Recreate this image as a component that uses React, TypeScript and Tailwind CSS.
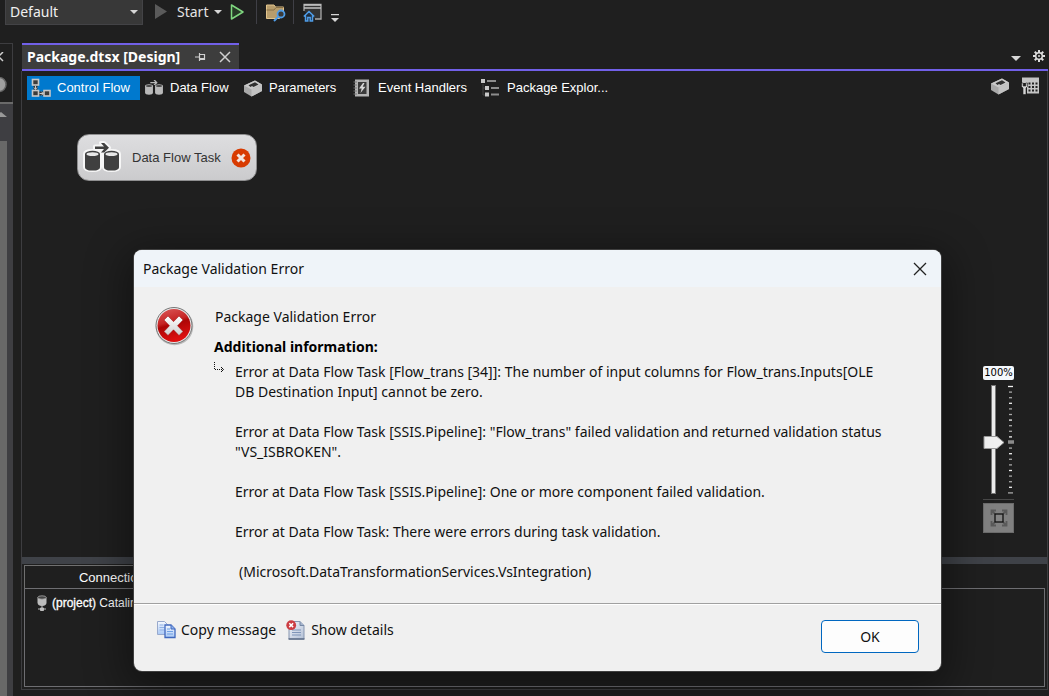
import React from "react";

const uiFont = "font-['Noto_Sans','Open_Sans',sans-serif]";
const tabFont = "font-['Liberation_Sans',Arial,sans-serif]";

function Cylinder({ x, fill, rim }: { x: number; fill: string; rim: string }) {
  return (
    <g transform={`translate(${x} 0)`}>
      <path d="M0 13v13c0 2.600 3 3.600 7.500 3.600S15 28.600 15 26V13z" fill={fill} />
      <ellipse cx="7.500" cy="13" rx="7.500" ry="3.200" fill={fill} />
      <ellipse cx="7.500" cy="13.200" rx="6" ry="1.900" fill={rim} />
    </g>
  );
}

function DataFlowIcon({ className, fill, rim, halo }: { className: string; fill: string; rim: string; halo?: boolean }) {
  return (
    <svg className={className} viewBox="0 0 38 34" aria-hidden="true">
      {halo && (
        <g fill="#f6f6f6" stroke="#f6f6f6" strokeWidth="4" strokeLinejoin="round">
          <path d="M2 13c0-4 15-4 15 0v13c0 4-15 4-15 0zM21 13c0-4 15-4 15 0v13c0 4-15 4-15 0z" />
          <path d="M12 5.500h8.500L18 2h3l5 4.800-5 4.700h-3l2.500-3.500H12z" />
        </g>
      )}
      <Cylinder x={2} fill={fill} rim={rim} />
      <Cylinder x={21} fill={fill} rim={rim} />
      <path d="M12 5.500h9L18 2h3.200L26 6.800l-4.800 4.700H18L21 8h-9z" fill={fill} />
    </svg>
  );
}

function ControlFlowIcon() {
  return (
    <svg className="size-5 shrink-0" viewBox="0 0 20 20" fill="#3c3c3c" stroke="#c8c8c8" aria-hidden="true">
      <path d="M4.500 2v14M4.500 15.500h12" stroke="#333" strokeWidth="4" />
      <rect x="1.500" y="1.500" width="6" height="5.500" strokeWidth="1.600" />
      <rect x="1.500" y="12.500" width="6" height="5.500" strokeWidth="1.600" />
      <rect x="13" y="12.500" width="6" height="5.500" strokeWidth="1.600" />
      <path d="M4.500 8v3M3 9.500l1.500 2L6 9.500M8.500 15.500h3.500M10.500 14l2 1.500-2 1.500" strokeWidth="1" fill="none" />
    </svg>
  );
}

function BoxIcon() {
  return (
    <svg className="size-5 shrink-0" viewBox="0 0 20 20" aria-hidden="true">
      <path d="M1 7.500 12 2.500l7 4v6.500L8.500 18.500 1 14z" fill="#a9a9a9" />
      <path d="M1 7.500 12 2.500l7 4-10.500 5z" fill="#c9c9c9" />
      <path d="M5.500 7.300 12 4.300l3.500 2.200-5 2.600-1.500-1-1.500.9z" fill="#303030" />
      <path d="M8.500 11.500v7l10.500-5.500V6.500z" fill="#c2c2c2" />
    </svg>
  );
}

function EventIcon() {
  return (
    <svg className="size-5 shrink-0" viewBox="0 0 20 20" aria-hidden="true">
      <path d="M3 1.500h14v17H3z" fill="#b4b4b4" />
      <path d="M6 4h8.500v12H6z" fill="#3b3b3b" />
      <path d="M11 5 7 10.500h2.700L8.500 15l5-6.200h-2.800L12.500 5z" fill="#d8d8d8" />
      <path d="M1.500 4H5M1.500 7H5M1.500 10H5M1.500 13H5M1.500 16H5" stroke="#777" strokeWidth="1.200" />
    </svg>
  );
}

function ExplorerIcon() {
  return (
    <svg className="size-5 shrink-0" viewBox="0 0 20 20" aria-hidden="true">
      <path d="M0 1h4v4H0zM4 8h4v4H4zM4 14.500h4v4H4z" fill="#c8c8c8" />
      <path d="M6 3h9M10 10h8M10 16.500h8" stroke="#8d8d8d" strokeWidth="1.800" />
      <path d="M2 6v11h2M2 10h2" stroke="#444" fill="none" />
    </svg>
  );
}

function VariablesIcon() {
  return (
    <svg className="size-5" viewBox="0 0 20 20" aria-hidden="true">
      <path d="M2 1.500h17v16H7V7H2z" fill="#c4c4c4" />
      <path d="M8.500 6.500h2v2h-2zM12 6.500h2v2h-2zM15.500 6.500h2v2h-2zM8.500 10h2v2h-2zM12 10h2v2h-2zM15.500 10h2v2h-2zM8.500 13.500h2v2h-2zM12 13.500h2v2h-2zM15.500 13.500h2v2h-2z" fill="#222" />
      <path d="M1.500 7v3.500L3 12v6.500h3V12l1.500-1.500V7H5.800v3H3.200V7z" fill="#d4d4d4" stroke="#1f1f1f" strokeWidth=".6" />
    </svg>
  );
}

function GearIcon() {
  const teeth = [0, 45, 90, 135, 180, 225, 270, 315];
  return (
    <svg className="size-3" viewBox="0 0 12 12" aria-hidden="true">
      {teeth.map((a) => (
        <rect key={a} x="5" y="0" width="2" height="3" fill="#ddd" transform={`rotate(${a} 6 6)`} />
      ))}
      <circle cx="6" cy="6" r="3.300" fill="none" stroke="#ddd" strokeWidth="1.500" />
      <circle cx="6" cy="6" r="1" fill="#ddd" />
    </svg>
  );
}

function Caret({ className = "h-1 w-2" }: { className?: string }) {
  return (
    <svg className={`shrink-0 ${className}`} viewBox="0 0 8 4" aria-hidden="true">
      <path d="M0 0h8L4 4z" fill="#d6d6d6" />
    </svg>
  );
}

function Toolbar() {
  return (
    <header className={`flex h-[43px] items-start pl-[5px] text-sm text-[#e4e4e4] ${uiFont}`}>
      <div className="relative h-[25px] w-[138px] border border-t-0 border-[#434346] bg-[#383838]">
        <select aria-label="Solution configuration" className="block h-6 w-full appearance-none bg-transparent pl-1 text-sm leading-6 text-[#f0f0f0] outline-none">
          <option>Default</option>
        </select>
        <span className="pointer-events-none absolute top-2.5 right-1 flex">
          <Caret />
        </span>
      </div>
      <button type="button" className="ml-3 flex h-6 items-center">
        <svg className="h-4 w-3" viewBox="0 0 12 16" aria-hidden="true">
          <path d="M0 0v15l12-7.500z" fill="#5a5a5a" />
        </svg>
        <span className="ml-2.5">Start</span>
        <span className="ml-1.5 flex"><Caret /></span>
      </button>
      <button type="button" aria-label="Start without debugging" className="ml-2 flex h-6 items-center">
        <svg className="h-4 w-3.5" viewBox="0 0 14 16" aria-hidden="true">
          <path d="M1.500 1v14L13 8z" fill="#263a26" stroke="#7fd67f" strokeWidth="1.500" strokeLinejoin="round" />
        </svg>
      </button>
      <div className="ml-3 h-6 w-px bg-[#3f3f46]" />
      <button type="button" aria-label="Find in files" className="ml-2 flex h-6 items-center">
        <svg className="h-5 w-[22px]" viewBox="0 0 22 20" aria-hidden="true">
          <path d="M1.500 3v13.500h13l4-5V5h-8L9 3z" fill="#b89d6c" stroke="#e3c58d" />
          <path d="M1.500 8h7.500l2-2.500h7.500" stroke="#8a7146" fill="none" />
          <path d="m13.500 14.500-4.500 4.500" stroke="#4f9de8" strokeWidth="2" />
          <circle cx="16" cy="12" r="3.500" fill="#3b3a38" stroke="#4f9de8" strokeWidth="1.800" />
        </svg>
      </button>
      <div className="ml-1.5 h-6 w-px bg-[#3f3f46]" />
      <button type="button" aria-label="Start window" className="ml-[9px] flex h-6 items-center">
        <svg className="h-5 w-5" viewBox="0 0 20 20" aria-hidden="true">
          <path d="M1 9V2.500h17V17h-6" fill="#333" stroke="#aaa" strokeWidth="1.300" />
          <path d="M1 3h17M1 6h17" stroke="#c2c2c2" strokeWidth="1.300" />
          <path d="M.8 14.500 6 9.500l5.200 5M2.500 13.500V19h2.300v-3.500h2.400V19h2.300v-5.500" fill="#20344a" stroke="#4f9de8" strokeWidth="1.500" />
        </svg>
      </button>
      <button type="button" aria-label="Toolbar options" className="mt-3.5 ml-2">
        <svg className="h-2 w-2" viewBox="0 0 8 8" aria-hidden="true">
          <path d="M0 0h8v1.200H0zM0 4h8L4 8z" fill="#d6d6d6" />
        </svg>
      </button>
    </header>
  );
}

function LeftDock() {
  return (
    <aside className="flex w-[13px] shrink-0 flex-col overflow-hidden border-t border-[#3d3d40] bg-[#3e3e42]">
      <div className="flex h-[58px] flex-col border-r border-[#3d3d40] bg-[#1f1f1f]">
        <svg className="mt-2 h-2.5 w-3" viewBox="0 0 12 10" aria-hidden="true">
          <path d="m-6 0 9 9M3 0l-9 9" stroke="#d0d0d0" strokeWidth="1.500" />
        </svg>
        <svg className="mt-[15px] h-4 w-3" viewBox="0 0 12 16" aria-hidden="true">
          <circle cx="-1" cy="7.500" r="7" fill="#a0a0a0" stroke="#666" strokeWidth="1.500" />
        </svg>
      </div>
      <div className="h-0.5 bg-[#6a6a6a]" />
      <svg className="mt-2 h-1.5 w-[7px]" viewBox="0 0 7 6" aria-hidden="true">
        <path d="M-5 5 1 0l6 5z" fill="#999" />
      </svg>
      <div className="mt-[23px] w-[7px] grow bg-[#686868]" />
    </aside>
  );
}

const tabs = [
  { label: "Control Flow", icon: <ControlFlowIcon />, active: true },
  { label: "Data Flow", icon: <DataFlowIcon className="h-[18px] w-5 shrink-0" fill="#b9b9b9" rim="#444" />, active: false },
  { label: "Parameters", icon: <BoxIcon />, active: false },
  { label: "Event Handlers", icon: <EventIcon />, active: false },
  { label: "Package Explor...", icon: <ExplorerIcon />, active: false },
];

function DesignerTabs() {
  return (
    <div className={`flex h-[29px] items-end justify-between pr-[7px] pl-[5px] text-[13px] text-white ${tabFont}`}>
      <nav className="grid grid-cols-[113px_99px_109px_129px_auto]">
        {tabs.map((t) => (
          <button key={t.label} type="button" className={`flex h-6 items-center gap-1.5 px-1 whitespace-nowrap ${t.active ? "bg-[#0079ce]" : ""}`}>
            {t.icon}
            <span>{t.label}</span>
          </button>
        ))}
      </nav>
      <div className="flex h-7 items-center gap-2.5">
        <button type="button" aria-label="Parameters"><BoxIcon /></button>
        <button type="button" aria-label="Variables"><VariablesIcon /></button>
      </div>
    </div>
  );
}

function ZoomControl() {
  const ticks = Array.from({ length: 20 }, (_, i) => i);
  return (
    <div className="absolute top-[266px] right-[33px] flex w-[31px] flex-col items-center">
      <output className="h-3.5 w-full rounded-xs bg-[#f4f8fc] text-center font-['DejaVu_Sans',sans-serif] text-[10px] leading-[14px] text-black">100%</output>
      <div className="relative mt-1">
        <svg className="block h-[111px] w-[31px]" viewBox="0 0 31 111" aria-hidden="true">
          <rect x="8.500" y="1.500" width="4" height="108" fill="#ececec" stroke="#777" />
          {ticks.map((i) => (
            <path key={i} d={`M${i === 0 || i === 19 ? 25 : 26} ${2.5 + i * 5.6}h${i === 0 || i === 19 ? 5 : 3}`} stroke={i % 3 ? "#a8a8a8" : "#f0f0f0"} strokeWidth="1.300" />
          ))}
          <path d="M25 58h6" stroke="#8b8b8b" strokeWidth="3.500" />
          <path d="M1 52.500h13l7 6-7 6H1z" fill="#f0f0f0" stroke="#999" />
        </svg>
        <input type="range" aria-label="Zoom" min="10" max="190" defaultValue="100" className="absolute inset-0 h-full w-full opacity-0 [writing-mode:vertical-lr]" />
      </div>
      <div className="mt-1 h-px w-full bg-[#484848]" />
      <button type="button" aria-label="Zoom to fit" className="mt-[3px] flex h-[30px] w-full items-center justify-center border border-[#6c6c6c] bg-[#808080]">
        <svg className="size-[18px]" viewBox="0 0 18 18" fill="none" aria-hidden="true">
          <path d="M1.500 6V1.500H6M12 1.500h4.500V6M16.500 12v4.500H12M6 16.500H1.500V12M2 2l3 3M16 2l-3 3M16 16l-3-3M2 16l3-3" stroke="#5a5a5a" strokeWidth="1.800" />
          <rect x="5" y="5" width="8" height="8" fill="#858585" stroke="#111" strokeWidth="1.300" />
        </svg>
      </button>
    </div>
  );
}

function Designer() {
  return (
    <main className={`relative h-[457px] ${tabFont}`}>
      <div className="absolute top-[34px] left-[55px] flex h-[47px] w-[180px] items-center rounded-xl border border-[#8f8f90] bg-linear-to-b from-[#dedee0] to-[#cbcbcd] pr-[5px] pl-[5px] text-[13px] text-[#333]">
        <DataFlowIcon className="h-[34px] w-[38px] shrink-0" fill="#404040" rim="#e8e8e8" halo />
        <span className="ml-[11px] whitespace-nowrap">Data Flow Task</span>
        <svg className="ml-auto size-5 shrink-0" viewBox="0 0 20 20" aria-hidden="true">
          <circle cx="10" cy="10" r="9.500" fill="#d83b01" />
          <path d="m6.500 6.500 7 7m0-7-7 7" stroke="#f3e6e0" strokeWidth="3" />
        </svg>
      </div>
      <ZoomControl />
    </main>
  );
}

function Connections() {
  return (
    <section className={`flex grow flex-col px-0.5 pt-px pb-0.5 text-white ${tabFont}`}>
      <h2 className="h-[23px] w-[237px] border border-b-0 border-[#707070] text-center text-[13px] leading-[23px]">Connection Managers</h2>
      <ul className="grow border border-[#6e6e72] pt-1 pl-[11px]">
        <li className="flex h-5 items-center gap-1 text-[11px]">
          <svg className="h-4 w-3" viewBox="0 0 12 16" aria-hidden="true">
            <path d="M1.500 2.500v5C1.500 9.500 3 11 6 11s4.500-1.500 4.500-3.500v-5z" fill="#bdbdbd" />
            <ellipse cx="6" cy="2.500" rx="4.200" ry="1.700" fill="#444" stroke="#aaa" strokeWidth=".8" />
            <path d="M6 11v3M2 14h8M4.500 13h3v2.500h-3z" stroke="#bdbdbd" fill="#bdbdbd" />
          </svg>
          <span className="text-xs whitespace-nowrap"><span className="[-webkit-text-stroke:0.3px_white]">(project)</span> CatalinDb</span>
        </li>
      </ul>
    </section>
  );
}

function ErrorDialog() {
  return (
    <div role="dialog" aria-labelledby="dialog-title" className={`absolute top-[250px] left-[134px] w-[807px] overflow-hidden rounded-lg bg-[#f0f0f0] text-sm leading-5 text-[#111] shadow-[0_0_0_1px_#3f3f3f,0_10px_40px_8px_rgba(0,0,0,0.4)] ${uiFont}`}>
      <div className="flex h-[37px] items-center justify-between bg-[#eff4f9] pr-3.5 pl-[9px]">
        <h1 id="dialog-title">Package Validation Error</h1>
        <button type="button" aria-label="Close">
          <svg className="size-3.5" viewBox="0 0 14 14" aria-hidden="true">
            <path d="m1 1 12 12M13 1 1 13" stroke="#222" strokeWidth="1.300" />
          </svg>
        </button>
      </div>
      <div className="flex h-[316px] pt-5 pl-5">
        <svg className="size-10 shrink-0" viewBox="0 1 40 40" aria-hidden="true">
          <defs>
            <linearGradient id="errRed" x1="0" y1="0" x2="0.300" y2="1">
              <stop offset="0" stopColor="#dc5a5a" />
              <stop offset="0.450" stopColor="#c62525" />
              <stop offset="0.550" stopColor="#ad0606" />
              <stop offset="1" stopColor="#dd1010" />
            </linearGradient>
            <linearGradient id="errX" x1="0" y1="0" x2="0" y2="1">
              <stop offset="0" stopColor="#fff" />
              <stop offset="1" stopColor="#cfcfcf" />
            </linearGradient>
          </defs>
          <circle cx="20.500" cy="20.500" r="18.800" fill="#bbb" />
          <circle cx="20" cy="19.500" r="18" fill="#e8e8e8" stroke="#777" />
          <circle cx="20" cy="19.500" r="16.500" fill="url(#errRed)" />
          <path d="m14 10 5.500 5.700L25 10l4 4-5.500 5.700 5.500 5.800-4 4-5.500-5.700-5.500 5.700-4-4 5.500-5.800L10 14z" fill="url(#errX)" stroke="#991111" strokeWidth=".5" />
        </svg>
        <div className="pl-5">
          <p className="pl-px">Package Validation Error</p>
          <h2 className="mt-2.5 font-bold text-black">Additional information:</h2>
          <div className="mt-[5px] flex">
            <svg className="h-3 w-[21px] shrink-0" viewBox="0 1 21 12" fill="none" stroke="#111" aria-hidden="true">
              <path d="M.5 1v8" strokeDasharray="1 1" />
              <path d="M1 8.500h8" strokeDasharray="1 1" />
              <path d="m7 6 2.500 2.500L7 11" />
            </svg>
            <div className="space-y-5">
              <p>
                Error at Data Flow Task [Flow_trans [34]]: The number of input columns for Flow_trans.Inputs[OLE
                <br />
                DB Destination Input] cannot be zero.
              </p>
              <p>
                Error at Data Flow Task [SSIS.Pipeline]: "Flow_trans" failed validation and returned validation status
                <br />
                "VS_ISBROKEN".
              </p>
              <p>Error at Data Flow Task [SSIS.Pipeline]: One or more component failed validation.</p>
              <p>Error at Data Flow Task: There were errors during task validation.</p>
              <p className="pl-1">(Microsoft.DataTransformationServices.VsIntegration)</p>
            </div>
          </div>
        </div>
      </div>
      <div className="flex h-[68px] items-start border-t border-[#a0a0a0] pr-[22px] pl-[22px] shadow-[inset_0_1px_0_#fff]">
        <button type="button" className="mt-4 flex items-center gap-[5px]">
          <svg className="h-[18px] w-5" viewBox="0 0 20 18" aria-hidden="true">
            <defs>
              <linearGradient id="sheet" x1="0" y1="0" x2="0" y2="1">
                <stop offset="0" stopColor="#f4f8ff" />
                <stop offset="1" stopColor="#a9c8f5" />
              </linearGradient>
            </defs>
            <path d="M1.500.5h7l3 3v10h-10z" fill="url(#sheet)" stroke="#98a9cc" />
            <path d="M3.500 4h4M3.500 6.500h5M3.500 9h5" stroke="#8fb0e4" />
            <path d="M9 4h6l4 4v8.500H9z" fill="url(#sheet)" stroke="#3f67bd" strokeWidth="1.300" />
            <path d="M15 4v4h4" fill="#8fb2ec" stroke="#3f67bd" />
            <path d="M11 8h3M11 10.500h6M11 13h6" stroke="#6f9fe4" />
          </svg>
          <span>Copy message</span>
        </button>
        <button type="button" className="mt-4 ml-2.5 flex items-center gap-[5px]">
          <svg className="size-5" viewBox="0 0 20 20" aria-hidden="true">
            <defs>
              <linearGradient id="report" x1="0" y1="0" x2="1" y2="1">
                <stop offset="0" stopColor="#f1f4f9" />
                <stop offset="1" stopColor="#b3c0d6" />
              </linearGradient>
            </defs>
            <path d="M3 1.500h11l4 4V19H3z" fill="url(#report)" stroke="#8796b0" />
            <path d="M14 1.500v4h4" fill="#a6b5cd" stroke="#7688a5" />
            <path d="M6 10h9M6 12.500h9M6 15h9" stroke="#7f95b8" />
            <path d="M2.500 19h16" stroke="#5f6f89" strokeWidth="1.500" />
            <circle cx="5.200" cy="5.200" r="4.900" fill="#cc3d43" />
            <path d="m3.300 3.300 3.800 3.800m0-3.800L3.300 7.100" stroke="#fff" strokeWidth="1.500" />
          </svg>
          <span>Show details</span>
        </button>
        <button type="button" className="mt-4 ml-auto h-[33px] w-[98px] rounded border border-[#0067c0] bg-[#fdfdfd] text-center">OK</button>
      </div>
    </div>
  );
}

export default function App() {
  return (
    <div className="relative flex min-h-screen flex-col overflow-hidden bg-[#1f1f1f]">
      <Toolbar />
      <div className="flex grow">
        <LeftDock />
        <div className="flex grow flex-col pr-px pb-1.5 pl-2">
          <div className={`ml-px flex h-[26px] items-stretch justify-between ${uiFont}`}>
            <div className="flex w-[217px] items-center border-t-2 border-[#7160e8] bg-[#3d3d3d] pl-[5px] text-sm font-bold text-white">
              <span className="whitespace-nowrap">Package.dtsx [Design]</span>
              <button type="button" aria-label="Pin tab" className="ml-[15px]">
                <svg className="h-2.5 w-3" viewBox="0 0 12 10" fill="none" stroke="#d0d0d0" aria-hidden="true">
                  <path d="M0 5h4M4.500 1v8M4.500 2.500h5v5h-5M4.500 6.500h5" strokeWidth="1.200" />
                </svg>
              </button>
              <button type="button" aria-label="Close tab" className="ml-3">
                <svg className="size-3" viewBox="0 0 12 12" aria-hidden="true">
                  <path d="m1 1 10 10M11 1 1 11" stroke="#d0d0d0" strokeWidth="1.500" />
                </svg>
              </button>
            </div>
            <div className="flex items-center gap-3 pr-[3px]">
              <button type="button" aria-label="Open documents" className="pt-1"><Caret className="h-[5px] w-2.5" /></button>
              <button type="button" aria-label="Window options"><GearIcon /></button>
            </div>
          </div>
          <div className="ml-px h-0.5 bg-[#7160e8]" />
          <div className="flex grow flex-col border-r border-b border-l border-[#3d3d40]">
            <DesignerTabs />
            <Designer />
            <div className="h-[7px] bg-[#3f4248]" />
            <Connections />
          </div>
        </div>
      </div>
      <ErrorDialog />
    </div>
  );
}
